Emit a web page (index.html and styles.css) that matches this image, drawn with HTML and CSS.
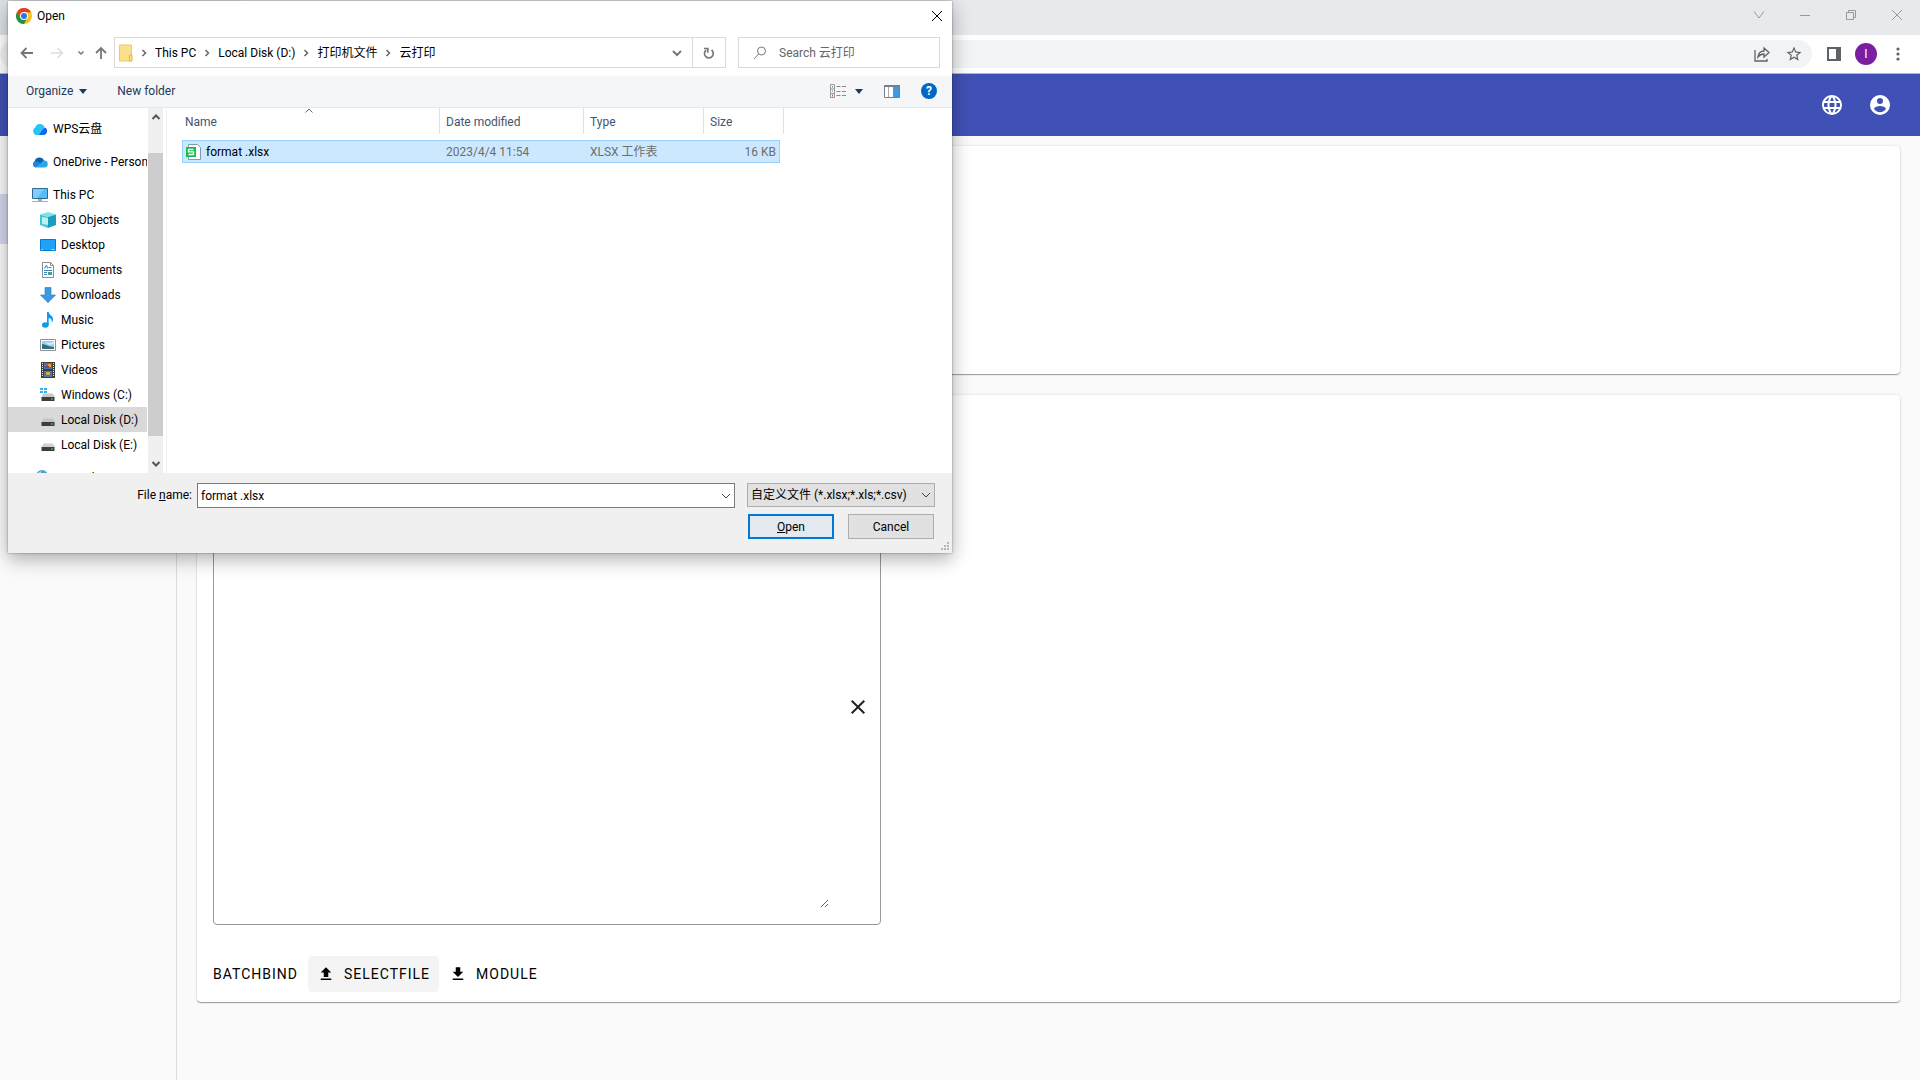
FILE: index.html
```html
<!DOCTYPE html>
<html lang="en">
<head>
    <meta charset="UTF-8">
    <meta name="viewport" content="width=device-width, initial-scale=1.0">
    <title>Batch bind</title>
    <link rel="stylesheet" href="styles.css">
</head>
<body>
    <div class="tab-strip">
        <div class="tab"></div>
        <div class="window-buttons">
            <button type="button" aria-label="Search tabs"><svg width="12" height="12" viewBox="0 0 12 12"><path d="M1 2.500L6 9l5-6.500"/></svg></button>
            <button type="button" aria-label="Minimize"><svg width="12" height="12" viewBox="0 0 12 12"><path d="M1 6.500h10"/></svg></button>
            <button type="button" aria-label="Restore"><svg width="12" height="12" viewBox="0 0 12 12"><path d="M1.500 3.500h7v7h-7zM3.500 3.500v-2h7v7h-2"/></svg></button>
            <button type="button" aria-label="Close"><svg width="12" height="12" viewBox="0 0 12 12"><path d="M1 1l10 10M11 1L1 11"/></svg></button>
        </div>
    </div>
    <div class="browser-bar">
        <div class="omnibox">
            <button type="button" aria-label="Share"><svg width="18" height="18" viewBox="0 0 18 18" fill="none" stroke="#5f6368" stroke-width="1.300"><path d="M2 5v11h12v-2M5 12c.5-4 3-6 6-6V3l5 4.500L11 12V9c-3 0-4.500 1-6 3z"/></svg></button>
            <button type="button" aria-label="Bookmark"><svg width="18" height="18" viewBox="0 0 24 24" fill="#5f6368"><path d="M22 9.240l-7.190-.620L12 2 9.190 8.630 2 9.240l5.460 4.730L5.820 21 12 17.270 18.180 21l-1.630-7.030L22 9.240zM12 15.400l-3.760 2.270 1-4.280-3.320-2.880 4.380-.380L12 6.100l1.710 4.040 4.380.380-3.320 2.880 1 4.280L12 15.400z"/></svg></button>
        </div>
        <button type="button" aria-label="Side panel"><svg width="16" height="16" viewBox="0 0 16 16"><path fill="#5f6368" d="M1 1h14v14H1z"/><path fill="#fff" d="M3 3h7v10H3z"/></svg></button>
        <button type="button" class="avatar" aria-label="Profile">I</button>
        <button type="button" aria-label="Menu"><svg width="16" height="16" viewBox="0 0 16 16" fill="#5f6368"><circle cx="8" cy="3" r="1.600"/><circle cx="8" cy="8" r="1.600"/><circle cx="8" cy="13" r="1.600"/></svg></button>
    </div>

    <header class="app-bar">
        <button type="button" aria-label="Language"><svg width="24" height="24" viewBox="0 0 24 24" fill="#fff"><path d="M16.360,14C16.440,13.340 16.500,12.680 16.500,12C16.500,11.320 16.440,10.660 16.360,10H19.740C19.900,10.640 20,11.310 20,12C20,12.690 19.900,13.360 19.740,14M14.590,19.560C15.190,18.450 15.650,17.250 15.970,16H18.920C17.960,17.650 16.430,18.930 14.590,19.560M14.340,14H9.660C9.560,13.340 9.500,12.680 9.500,12C9.500,11.320 9.560,10.650 9.660,10H14.340C14.430,10.650 14.500,11.320 14.500,12C14.500,12.680 14.430,13.340 14.340,14M12,19.960C11.170,18.760 10.500,17.430 10.090,16H13.910C13.500,17.430 12.830,18.760 12,19.960M8,8H5.080C6.030,6.340 7.570,5.060 9.400,4.440C8.800,5.550 8.350,6.750 8,8M5.080,16H8C8.350,17.250 8.800,18.450 9.400,19.560C7.570,18.930 6.030,17.650 5.080,16M4.260,14C4.100,13.360 4,12.690 4,12C4,11.310 4.100,10.640 4.260,10H7.640C7.560,10.660 7.500,11.320 7.500,12C7.500,12.680 7.560,13.340 7.640,14M12,4.030C12.830,5.230 13.500,6.570 13.910,8H10.090C10.500,6.570 11.170,5.230 12,4.030M18.920,8H15.970C15.650,6.750 15.190,5.550 14.590,4.440C16.430,5.070 17.960,6.340 18.920,8M12,2C6.470,2 2,6.500 2,12A10,10 0 0,0 12,22A10,10 0 0,0 22,12A10,10 0 0,0 12,2Z"/></svg></button>
        <button type="button" aria-label="Account"><svg width="24" height="24" viewBox="0 0 24 24" fill="#fff"><path d="M12,19.200C9.500,19.200 7.290,17.920 6,16C6.030,14 10,12.900 12,12.900C14,12.900 17.970,14 18,16C16.710,17.920 14.500,19.200 12,19.200M12,5A3,3 0 0,1 15,8A3,3 0 0,1 12,11A3,3 0 0,1 9,8A3,3 0 0,1 12,5M12,2A10,10 0 0,0 2,12A10,10 0 0,0 12,22A10,10 0 0,0 22,12C22,6.470 17.500,2 12,2Z"/></svg></button>
    </header>

    <div class="app">
        <nav class="sidebar"><div class="sidebar-active"></div></nav>
        <main class="content">
            <section class="card card-top"></section>
            <section class="card card-bind">
                <div class="text-box">
                    <textarea aria-label="Devices"></textarea>
                    <button type="button" aria-label="Clear"><svg width="24" height="24" viewBox="0 0 24 24" fill="#222"><path d="M19,6.410L17.590,5L12,10.590L6.410,5L5,6.410L10.590,12L5,17.590L6.410,19L12,13.410L17.590,19L19,17.590L13.410,12L19,6.410Z"/></svg></button>
                </div>
                <div class="actions">
                    <button type="button">BATCHBIND</button>
                    <button type="button" class="focused"><svg width="18" height="18" viewBox="0 0 24 24"><path d="M9,16V10H5L12,3L19,10H15V16H9M5,20V18H19V20H5Z" /></svg>SELECTFILE</button>
                    <button type="button"><svg width="18" height="18" viewBox="0 0 24 24"><path d="M5,20H19V18H5M19,9H15V3H9V9H5L12,16L19,9Z"/></svg>MODULE</button>
                </div>
            </section>
        </main>
    </div>

    <!-- File picker -->
    <div class="dialog" role="dialog" aria-label="Open">
        <div class="dialog-title">
            <svg width="16" height="16" viewBox="0 0 16 16"><circle cx="8" cy="8" r="8" fill="#fbc116"/><path fill="#229342" d="M8 8l3.460 2L8 16A8 8 0 0 1 1.070 4l3.470 6z"/><path fill="#e33b2e" d="M1.070 4L4.500 10 8 4.200h6.930A8 8 0 0 0 1.070 4z"/><circle cx="8" cy="8" r="4" fill="#fff"/><circle cx="8" cy="8" r="3" fill="#2a75e8"/></svg>
            <span>Open</span>
            <button type="button" aria-label="Close"><svg width="12" height="12" viewBox="0 0 12 12"><path fill="none" stroke="#000" d="M1 1l10 10M11 1L1 11"/></svg></button>
        </div>

        <div class="address-row">
            <button type="button" class="nav-back" aria-label="Back"><svg width="14" height="12" viewBox="0 0 14 12" fill="none" stroke="#777" stroke-width="1.800"><path d="M13 6H2M6.500 1L1.500 6l5 5"/></svg></button>
            <button type="button" class="nav-forward" aria-label="Forward"><svg width="14" height="12" viewBox="0 0 14 12" fill="none" stroke="#ddd" stroke-width="1.500"><path d="M1 6h11M7.500 1l5 5-5 5"/></svg></button>
            <button type="button" class="nav-recent" aria-label="Recent"><svg width="8" height="6" viewBox="0 0 8 6" fill="none" stroke="#777" stroke-width="1.500"><path d="M1.500 1.500L4 4l2.500-2.500"/></svg></button>
            <button type="button" class="nav-up" aria-label="Up"><svg width="12" height="14" viewBox="0 0 12 14" fill="none" stroke="#777" stroke-width="1.800"><path d="M6 13V2M1 7l5-5 5 5"/></svg></button>
            <div class="address">
                <svg class="folder" width="14" height="18" viewBox="0 0 14 18"><path fill="#fbe08b" stroke="#efc95b" d="M.5 1h12v16H.5z"/><path fill="#fbe08b" stroke="#e5b945" d="M10.500 11h2.500v6h-2.500z"/></svg>
                <svg class="crumb-arrow" width="6" height="8" viewBox="0 0 6 8"><path d="M1.500 1L4.500 4l-3 3"/></svg>
                <a href="#">This PC</a>
                <svg class="crumb-arrow" width="6" height="8" viewBox="0 0 6 8"><path d="M1.500 1L4.500 4l-3 3"/></svg>
                <a href="#">Local Disk (D:)</a>
                <svg class="crumb-arrow" width="6" height="8" viewBox="0 0 6 8"><path d="M1.500 1L4.500 4l-3 3"/></svg>
                <a href="#">打印机文件</a>
                <svg class="crumb-arrow" width="6" height="8" viewBox="0 0 6 8"><path d="M1.500 1L4.500 4l-3 3"/></svg>
                <a href="#">云打印</a>
                <button type="button" class="address-drop" aria-label="Previous locations"><svg width="10" height="8" viewBox="0 0 10 8" fill="none" stroke="#777" stroke-width="2"><path d="M1 2l4 4 4-4"/></svg></button>
                <button type="button" class="refresh" aria-label="Refresh"><svg width="12" height="14" viewBox="0 0 12 14" fill="none" stroke="#777" stroke-width="1.700"><path d="M8.500 4A4.400 4.400 0 1 1 3 4.200M1 2.500h3.800v4.200"/></svg></button>
            </div>
            <div class="search">
                <svg width="14" height="14" viewBox="0 0 14 14" fill="none" stroke="#777"><circle cx="8.500" cy="5" r="4"/><path d="M5.500 8L1 13"/></svg>
                <input type="text" aria-label="Search" placeholder="Search 云打印">
            </div>
        </div>

        <div class="command-bar">
            <button type="button">Organize <span class="caret"></span></button>
            <button type="button">New folder</button>
            <div class="view-buttons">
                <button type="button" aria-label="Change view"><svg width="16" height="14" viewBox="0 0 16 14"><path fill="none" stroke="#999" d="M.5.500h4v13h-4zM.5 5h4M.5 9.500h4"/><path stroke="#3b8ed8" d="M2 7h1"/><path stroke="#555" d="M2 2.800h1"/><path stroke="#d8583b" stroke-width="2" d="M2 11.500h1"/><path stroke="#888" d="M6.500 2.500h4M12 2.500h4M6.500 7.500h4M12 7.500h4M6.500 11.500h4M12 11.500h4"/></svg><span class="caret"></span></button>
                <button type="button" aria-label="Preview pane"><svg width="16" height="13" viewBox="0 0 16 13"><path fill="#fff" stroke="#76808a" d="M.5.500h15v12H.5z"/><path stroke="#76808a" stroke-width="2" d="M0 1h16"/><path stroke="#aaa" d="M4.500 2v10"/><path fill="#3e9ae0" d="M9 2h6v10H9z"/></svg></button>
                <button type="button" class="help" aria-label="Help">?</button>
            </div>
        </div>

        <div class="dialog-body">
            <div class="tree">
                <div class="tree-item group">
                    <svg width="16" height="16" viewBox="0 0 16 16"><path fill="#27c5f5" d="M4 14a4 4 0 0 1-.8-7.400A5 5 0 0 1 12.500 6L9 14z"/><path fill="#1565e8" d="M7 14l4-6 2-1.500A4 4 0 0 1 11.500 14z"/></svg>
                    <span>WPS云盘</span>
                </div>
                <div class="tree-item group">
                    <svg width="16" height="16" viewBox="0 0 16 16"><path fill="#0f5fb4" d="M2.500 7.500A5 5 0 0 1 12 6.500l-4 4z"/><path fill="#1687d9" d="M3.500 13.500A3.300 3.300 0 0 1 4 7l6 3z"/><path fill="#28a8ea" d="M3.500 13.500L12 6.500a3.500 3.500 0 0 1 .5 7z"/></svg>
                    <span>OneDrive - Personal</span>
                </div>
                <div class="tree-item">
                    <svg width="16" height="16" viewBox="0 0 16 16"><path fill="#55bdf8" stroke="#32678e" d="M.5 1.500h15v10H.5z"/><path fill="#a5dcff" d="M1 2h11L5 11H1z" opacity=".5"/><path fill="#a3adb5" d="M6 12h4v2H6zM0 14h16v1H0z"/></svg>
                    <span>This PC</span>
                </div>
                <div class="tree-item child">
                    <svg width="16" height="16" viewBox="0 0 16 16"><path fill="#7de2ea" d="M0 2.500L8 0l8 2.500L8 5z"/><path fill="#45c4d8" d="M0 2.500L8 5v11l-8-3z"/><path fill="#bff1f4" d="M2 5l6 1v7l-6-1z"/><path fill="#179ec0" d="M8 5l8-2.500v10.500L8 16z"/></svg>
                    <span>3D Objects</span>
                </div>
                <div class="tree-item child">
                    <svg width="16" height="16" viewBox="0 0 16 16"><path fill="#1ea2fa" stroke="#0b78cb" d="M.5 2.500h15v11H.5z"/><path stroke="#fff" d="M1.500 12.500h1M11.500 12.500h1M13.500 12.500h1"/></svg>
                    <span>Desktop</span>
                </div>
                <div class="tree-item child">
                    <svg width="16" height="16" viewBox="0 0 16 16"><path fill="#fff" stroke="#8c8c8c" d="M2.500.500h8l3 3v12h-11z"/><path fill="none" stroke="#8c8c8c" d="M10.500.500v3h3"/><path fill="none" stroke="#3283bd" d="M4.500 6.500L6.500 3l1 3.500M8.500 5.500h3M4 8.500h8M4 10.500h3M4 12.500h3"/><path fill="#4b9b9b" d="M8 10h4v3H8z"/></svg>
                    <span>Documents</span>
                </div>
                <div class="tree-item child">
                    <svg width="16" height="16" viewBox="0 0 16 16"><path fill="#3d98e3" stroke="#2477bd" stroke-width=".6" d="M5 .5h6V8h4.500L8 15.700.5 8H5z"/></svg>
                    <span>Downloads</span>
                </div>
                <div class="tree-item child">
                    <svg width="16" height="16" viewBox="0 0 16 16"><ellipse cx="5.300" cy="13" rx="3.300" ry="2.700" fill="#0c9af5"/><path fill="#0c9af5" d="M7 0h1.700c.3 3 4.800 3.500 4.300 8-.2 1.200-.6 2-1.500 2.500.9-3-.8-4-2.800-4.500V13H7z"/></svg>
                    <span>Music</span>
                </div>
                <div class="tree-item child">
                    <svg width="16" height="16" viewBox="0 0 16 16"><path fill="#fff" stroke="#919191" d="M.5 2.500h15v11H.5z"/><path fill="#9ccdf0" d="M2 4h12v8H2z"/><path fill="#356b85" d="M2 7c4 0 6 3 12 3v2H2z"/><path fill="#d9ecf7" d="M5 5l4 1 5-1v2L9 8z"/></svg>
                    <span>Pictures</span>
                </div>
                <div class="tree-item child">
                    <svg width="16" height="16" viewBox="0 0 16 16"><path fill="#3e3e3e" d="M1 0h14v16H1z"/><path fill="#4378bd" d="M4 1h8v6H4zM4 9h8v6H4z"/><path fill="#e5a32c" d="M8 2h3v3H8zM6 10h4v3H6z"/><path fill="#a33a38" d="M5 4h4v2H5z"/><path stroke="#e8e8e8" stroke-dasharray="1 1" d="M2.500 1v14M13.500 1v14"/></svg>
                    <span>Videos</span>
                </div>
                <div class="tree-item child">
                    <svg width="16" height="16" viewBox="0 0 16 16"><path fill="#2bb5ec" d="M0 1h3v2H0zM4 1h3v2H4zM0 4h3v2H0zM4 4h3v2H4z"/><path fill="#c9c9c9" d="M3.500 6.500h9.500l2 4H1.500z"/><path fill="#3d3d3d" d="M1.500 10h13v4h-13z"/><path fill="#4ce04c" d="M11 11.500h2v1h-2z"/></svg>
                    <span>Windows (C:)</span>
                </div>
                <div class="tree-item child selected">
                    <svg width="16" height="16" viewBox="0 0 16 16"><path fill="#c4c4c4" d="M3.500 6.500h9.500l2 4H1.500z"/><path fill="#3d3d3d" d="M1.500 10h13v4h-13z"/><path fill="#4ce04c" d="M11 11.500h2v1h-2z"/></svg>
                    <span>Local Disk (D:)</span>
                </div>
                <div class="tree-item child group">
                    <svg width="16" height="16" viewBox="0 0 16 16"><path fill="#d0d0d0" d="M3.500 6.500h9.500l2 4H1.500z"/><path fill="#3d3d3d" d="M1.500 10h13v4h-13z"/><path fill="#4ce04c" d="M11 11.500h2v1h-2z"/></svg>
                    <span>Local Disk (E:)</span>
                </div>
                <div class="tree-item">
                    <svg width="16" height="16" viewBox="0 0 16 16"><circle cx="10" cy="6" r="6" fill="#4ba3cc"/><path fill="#a8dcf0" d="M5 4l4-3v3z"/></svg>
                    <span>Network</span>
                </div>
            </div>
            <div class="scrollbar">
                <svg width="10" height="8" viewBox="0 0 10 8"><path d="M1.500 6L5 2.500 8.500 6"/></svg>
                <div class="scrollbar-thumb"></div>
                <svg width="10" height="8" viewBox="0 0 10 8"><path d="M1.500 2L5 5.500 8.500 2"/></svg>
            </div>
            <div class="file-list">
                <table>
                    <colgroup><col class="col-name"><col class="col-date"><col class="col-type"><col class="col-size"><col></colgroup>
                    <thead>
                        <tr>
                            <th>Name<svg class="sort-arrow" width="8" height="5" viewBox="0 0 8 5"><path fill="none" stroke="#666" d="M.5 4.500L4 1l3.500 3.500"/></svg></th>
                            <th>Date modified</th>
                            <th>Type</th>
                            <th colspan="2">Size</th>
                        </tr>
                    </thead>
                    <tbody>
                        <tr>
                            <td><div class="file"><svg width="16" height="16" viewBox="0 0 16 16"><path fill="#fff" stroke="#8399b0" d="M2.500.500h9l3 3v12h-12z"/><path fill="#15bd4b" d="M0 3h10v10H0z"/><path fill="none" stroke="#fff" stroke-width="1.300" d="M7.500 5.500h-5v2.300h5v2.700h-5"/></svg>format .xlsx</div></td>
                            <td>2023/4/4 11:54</td>
                            <td>XLSX 工作表</td>
                            <td>16 KB</td>
                        </tr>
                    </tbody>
                </table>
            </div>
        </div>

        <div class="dialog-footer">
            <div class="footer-row">
                <label for="file-name">File <u>n</u>ame:</label>
                <div class="combo">
                    <input type="text" id="file-name" value="format .xlsx">
                    <button type="button" aria-label="Recent files"><svg width="10" height="6" viewBox="0 0 10 6" fill="none" stroke="#444"><path d="M1 1l4 4 4-4"/></svg></button>
                </div>
                <div class="file-type">
                    <select aria-label="File type"><option>自定义文件 (*.xlsx;*.xls;*.csv)</option></select>
                    <svg width="10" height="6" viewBox="0 0 10 6" fill="none" stroke="#444"><path d="M1 1l4 4 4-4"/></svg>
                </div>
            </div>
            <div class="footer-buttons">
                <button type="button" class="primary"><u>O</u>pen</button>
                <button type="button">Cancel</button>
            </div>
            <svg class="grip" width="8" height="8" viewBox="0 0 8 8" fill="#b5b5b5"><path d="M6 0h2v2H6zM3 3h2v2H3zM6 3h2v2H6zM0 6h2v2H0zM3 6h2v2H3zM6 6h2v2H6z"/></svg>
        </div>
    </div>
</body>
</html>
```

FILE: styles.css
```css
* {
    box-sizing: border-box;
}
body {
    margin: 0;
    height: 100vh;
    display: flex;
    flex-direction: column;
    overflow: hidden;
    background-color: #fafafa;
    font-family: Roboto, "Noto Sans CJK SC", sans-serif;
}
button {
    padding: 0;
    border: 0;
    background: none;
    font: inherit;
    color: inherit;
}
svg {
    display: block;
    flex: none;
}

/* Browser */
.tab-strip {
    display: flex;
    justify-content: space-between;
    height: 35px;
    background-color: #e7e9ed;
}
.tab {
    width: 243px;
    background-color: #dee1e6;
}
.window-buttons {
    display: flex;
    align-items: center;
    gap: 34px;
    padding: 0 17px 6px 0;
}
.window-buttons svg {
    fill: none;
    stroke: #999;
}
.browser-bar {
    display: flex;
    align-items: center;
    height: 39px;
    padding-right: 14px;
    background-color: #fff;
    border-bottom: 1px solid #b4b7c9;
}
.omnibox {
    flex: 1;
    display: flex;
    align-items: center;
    justify-content: flex-end;
    gap: 14px;
    height: 28px;
    margin-right: 14px;
    padding-right: 9px;
    border-radius: 14px;
    background-color: #f1f3f4;
}
.avatar {
    width: 22px;
    height: 22px;
    margin: 0 13px;
    border-radius: 50%;
    background-color: #7b1fa2;
    color: #fff;
    font-size: 12px;
}

/* App */
.app-bar {
    display: flex;
    align-items: center;
    justify-content: flex-end;
    gap: 24px;
    height: 62px;
    padding-right: 28px;
    background-color: #3f51b5;
}
.app {
    flex: 1;
    display: flex;
}
.sidebar {
    width: 177px;
    padding-top: 58px;
    border-right: 1px solid #dcdcdc;
}
.sidebar-active {
    height: 50px;
    background-color: #d4d7ec;
}
.content {
    flex: 1;
    display: flex;
    flex-direction: column;
    gap: 21px;
    padding: 10px 20px 78px;
}
.card {
    border-radius: 4px;
    background-color: #fff;
    box-shadow: 0 1px 1px rgba(0, 0, 0, 0.36), 0 0 3px rgba(0, 0, 0, 0.12);
}
.card-top {
    height: 228px;
}
.card-bind {
    flex: 1;
    display: flex;
    flex-direction: column;
    padding: 93px 7px 10px;
}
.text-box {
    flex: 1;
    display: flex;
    align-items: center;
    gap: 17px;
    width: 668px;
    margin: 0 9px;
    padding: 16px 10px 16px 12px;
    border: 1px solid #999;
    border-radius: 4px;
}
.text-box textarea {
    flex: 1;
    height: 100%;
    border: 0;
    outline: 0;
    background: none;
    font: 16px Roboto, sans-serif;
    resize: both;
}
.actions {
    display: flex;
    gap: 1px;
    margin-top: 31px;
}
.actions button {
    display: flex;
    align-items: center;
    gap: 9px;
    height: 36px;
    padding: 0 9px;
    border-radius: 4px;
    font-size: 14px;
    letter-spacing: 1px;
    color: #000;
}
.actions .focused {
    background-color: #f4f4f4;
}

/* File dialog */
.dialog {
    position: absolute;
    top: 1px;
    left: 8px;
    width: 944px;
    background-color: #fff;
    box-shadow: 0 0 2px rgba(0, 0, 0, 0.4), 0 6px 18px rgba(0, 0, 0, 0.32);
    font-family: Roboto, "Noto Sans CJK SC", sans-serif;
    font-size: 12px;
    line-height: 16px;
    color: #000;
}
.dialog-title {
    display: flex;
    align-items: center;
    gap: 5px;
    height: 30px;
    padding: 0 9px 0 8px;
}
.dialog-title button {
    margin-left: auto;
}
.address-row {
    display: flex;
    align-items: center;
    height: 45px;
    padding: 0 12px 2px;
}
.nav-forward {
    margin-left: 16px;
}
.nav-recent {
    margin-left: 13px;
}
.nav-up {
    margin: 0 7px 0 10px;
}
.address {
    flex: 1;
    display: flex;
    align-items: center;
    height: 31px;
    margin-right: 12px;
    padding-left: 4px;
    border: 1px solid #d9d9d9;
}
.address a {
    color: inherit;
    text-decoration: none;
}
.crumb-arrow {
    margin: 0 8px;
    fill: none;
    stroke: #666;
    stroke-width: 1.5px;
}
.address-drop {
    margin-left: auto;
    padding: 0 10px;
}
.refresh {
    display: flex;
    align-items: center;
    justify-content: center;
    align-self: stretch;
    width: 33px;
    border-left: 1px solid #d9d9d9;
}
.search {
    display: flex;
    align-items: center;
    gap: 12px;
    width: 202px;
    height: 31px;
    padding: 0 14px;
    border: 1px solid #d9d9d9;
}
.search input {
    flex: 1;
    min-width: 0;
    padding: 0;
    border: 0;
    outline: 0;
    font: inherit;
}
.search input::placeholder {
    color: #666;
}
.command-bar {
    display: flex;
    align-items: center;
    gap: 30px;
    height: 32px;
    padding: 0 15px 1px 18px;
    background-color: #f5f6f7;
    border-bottom: 1px solid #e5e6e7;
    color: #1e395b;
}
.command-bar button {
    display: flex;
    align-items: center;
    gap: 6px;
}
.caret {
    border: 4px solid transparent;
    border-top: 5px solid #1e395b;
    border-bottom: 0;
}
.view-buttons {
    display: flex;
    align-items: center;
    gap: 21px;
    margin-left: auto;
}
.view-buttons button {
    gap: 9px;
}
.view-buttons .help {
    justify-content: center;
    width: 16px;
    height: 16px;
    border-radius: 50%;
    background-color: #0067c5;
    color: #fff;
    font-weight: bold;
}
.dialog-body {
    display: flex;
    height: 365px;
}
.tree {
    width: 140px;
    padding: 8px 1px 0 0;
    overflow: hidden;
}
.tree-item {
    display: flex;
    align-items: center;
    gap: 5px;
    height: 25px;
    padding-left: 24px;
    white-space: nowrap;
    overflow: hidden;
}
.child {
    padding-left: 32px;
}
.group {
    margin-bottom: 8px;
}
.selected {
    background-color: #d9d9d9;
}
.scrollbar {
    display: flex;
    flex-direction: column;
    align-items: center;
    width: 15px;
    padding: 5px 0;
    background-color: #f0f0f0;
}
.scrollbar svg {
    fill: none;
    stroke: #555;
    stroke-width: 2px;
}
.scrollbar-thumb {
    width: 15px;
    height: 283px;
    margin: 32px 0 auto;
    background-color: #cdcdcd;
}
.file-list {
    flex: 1;
    margin-left: 3px;
    padding-left: 15px;
    border-left: 1px solid #f2f2f2;
}
table {
    width: 602px;
    table-layout: fixed;
    border-spacing: 0;
}
.col-name {
    width: 258px;
}
.col-date {
    width: 144px;
}
.col-type {
    width: 120px;
}
.col-size {
    width: 76px;
}
th {
    position: relative;
    height: 26px;
    padding: 2px 6px 0;
    border-right: 1px solid #e0e0e0;
    font-weight: normal;
    text-align: left;
    color: #43546f;
}
th:first-child, td:first-child {
    padding-left: 3px;
}
.sort-arrow {
    position: absolute;
    top: 0;
    left: 50%;
    margin-left: -6px;
}
/* space between the column heads and the first row */
tbody::before {
    content: "";
    display: block;
    height: 6px;
}
td {
    height: 23px;
    padding: 0 6px;
    border: solid #99d1ff;
    border-width: 1px 0;
    background-color: #cce8ff;
    color: #6d6d6d;
}
td:first-child {
    border-left-width: 1px;
    color: #000;
}
td:last-child {
    padding-right: 3px;
    border-right-width: 1px;
    text-align: right;
}
.file {
    display: flex;
    align-items: center;
    gap: 4px;
}
.dialog-footer {
    position: relative;
    height: 80px;
    padding: 10px 17px 0 0;
    background-color: #f0f0f0;
}
.footer-row {
    display: flex;
}
.footer-row label {
    width: 189px;
    padding: 4px 5px 0 0;
    text-align: right;
}
.combo {
    flex: 1;
    display: flex;
    height: 25px;
    margin-right: 12px;
    padding-right: 3px;
    border: 1px solid #7a7a7a;
    background-color: #fff;
}
.combo input {
    flex: 1;
    padding: 0 3px;
    border: 0;
    outline: 0;
    font: inherit;
}
.file-type {
    position: relative;
    width: 188px;
}
.file-type select {
    width: 100%;
    height: 24px;
    padding: 0 3px;
    appearance: none;
    border: 1px solid #adadad;
    border-radius: 0;
    background-color: #e1e1e1;
    font: inherit;
    color: inherit;
}
.file-type svg {
    position: absolute;
    top: 9px;
    right: 4px;
    pointer-events: none;
}
.footer-buttons {
    display: flex;
    justify-content: flex-end;
    gap: 14px;
    margin-top: 6px;
    padding-right: 1px;
}
.footer-buttons button {
    width: 86px;
    height: 25px;
    border: 1px solid #adadad;
    background-color: #e1e1e1;
}
.footer-buttons .primary {
    border: 2px solid #0078d7;
    background-color: #e3e9ef;
}
.grip {
    position: absolute;
    right: 3px;
    bottom: 3px;
}
```
